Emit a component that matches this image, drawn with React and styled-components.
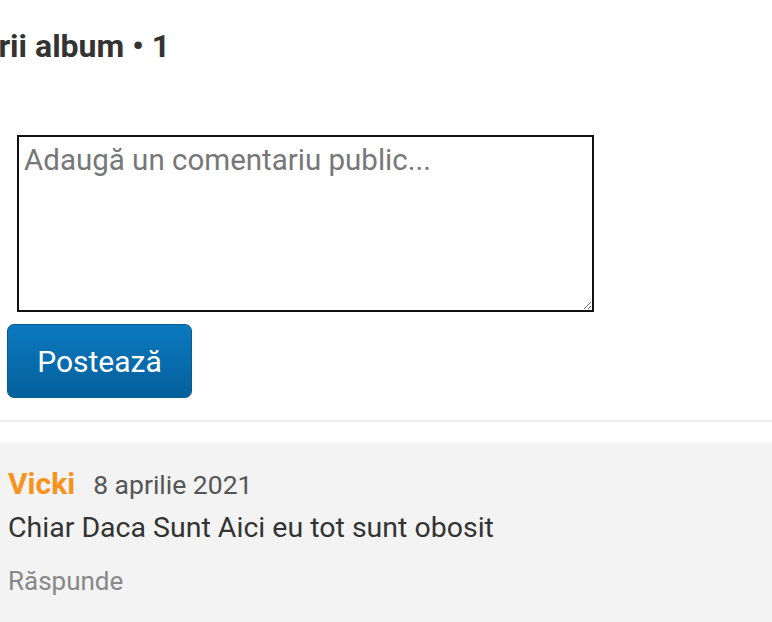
import React from 'react'
import styled, { createGlobalStyle } from 'styled-components'

const GlobalStyle = createGlobalStyle`
  html, body {
    margin: 0;
    padding: 0;
    background: #fff;
    font-family: Roboto, 'Noto Sans', Arial, sans-serif;
  }
`

const Page = styled.div`
  width: 772px;
  height: 622px;
  overflow: hidden;
  display: flex;
  flex-direction: column;
`

const HeadingClip = styled.div`
  width: 170px;
  overflow: hidden;
  display: flex;
  justify-content: flex-end;
  margin-top: 25px;
`

const Heading = styled.h2`
  margin: 0;
  white-space: nowrap;
  font-size: 32px;
  line-height: 42px;
  font-weight: 700;
  color: #333;
`

const Form = styled.form`
  display: flex;
  flex-direction: column;
  align-items: flex-start;
  padding: 0 7px;
  margin-top: 68px;
`

const TextArea = styled.textarea`
  box-sizing: border-box;
  width: 577px;
  height: 177px;
  margin: 0 0 0 10px;
  padding: 6px 5px;
  border: 2px solid #111;
  border-radius: 0;
  font-family: Roboto, Arial, sans-serif;
  font-size: 29.5px;
  line-height: 34px;
  color: #333;
  resize: both;
  &::placeholder {
    color: #777;
  }
`

const Button = styled.button`
  box-sizing: border-box;
  margin-top: 12px;
  width: 185px;
  height: 74px;
  border: 1px solid #0a5a8e;
  border-radius: 7px;
  background: linear-gradient(#0b79bf, #05609c);
  color: #fff;
  font-family: Roboto, Arial, sans-serif;
  font-size: 30px;
  cursor: pointer;
`

const Divider = styled.hr`
  width: 100%;
  margin: 22px 0 0;
  border: none;
  border-top: 2px solid #eee;
`

const CommentBox = styled.div`
  flex: 1;
  margin-top: 21px;
  background: #f3f3f3;
  padding: 23px 8px 0;
  display: flex;
  flex-direction: column;
`

const Meta = styled.div`
  display: flex;
  align-items: baseline;
  gap: 18px;
`

const Author = styled.span`
  font-size: 30px;
  font-weight: 700;
  color: #f7931e;
`

const DateText = styled.span`
  font-size: 26.5px;
  color: #555;
`

const Body = styled.p`
  margin: 9px 0 0;
  font-size: 28.5px;
  line-height: 36px;
  color: #333;
`

const Reply = styled.a`
  margin-top: 18px;
  font-size: 26px;
  line-height: 34px;
  color: #888;
  cursor: pointer;
`

export default function App() {
  return (
    <Page>
      <GlobalStyle />
      <HeadingClip>
        <Heading>Comentarii album • 1</Heading>
      </HeadingClip>
      <Form onSubmit={(e) => e.preventDefault()}>
        <TextArea placeholder="Adaugă un comentariu public..." />
        <Button type="submit">Postează</Button>
      </Form>
      <Divider />
      <CommentBox>
        <Meta>
          <Author>Vicki</Author>
          <DateText>8 aprilie 2021</DateText>
        </Meta>
        <Body>Chiar Daca Sunt Aici eu tot sunt obosit</Body>
        <Reply>Răspunde</Reply>
      </CommentBox>
    </Page>
  )
}
